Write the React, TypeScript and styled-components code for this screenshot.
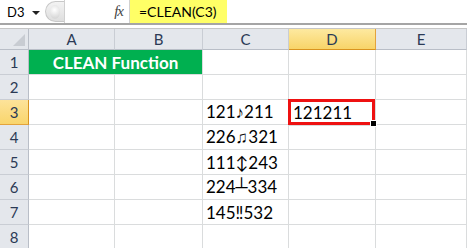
import React from 'react';
import styled, { createGlobalStyle } from 'styled-components';

const GlobalStyle = createGlobalStyle`
  body {
    margin: 0;
    background: #ffffff;
    font-family: Lato, "Open Sans", sans-serif;
  }
`;

const Page = styled.div`
  width: 467px;
  height: 248px;
  overflow: hidden;
  background: #ffffff;
`;

const FormulaBar = styled.div`
  display: flex;
  align-items: stretch;
  height: 23px;
  border-bottom: 2px solid #a5a5a5;
  font-size: 14px;
  color: #000;
`;

const NameBox = styled.div`
  width: 45px;
  flex-shrink: 0;
  display: flex;
  align-items: center;
  justify-content: space-between;
  padding: 0 5px 0 7px;
  box-sizing: border-box;
  font-size: 13px;
`;

const Caret = styled.span`
  width: 0;
  height: 0;
  border-left: 4px solid transparent;
  border-right: 4px solid transparent;
  border-top: 4px solid #222;
  margin-top: 2px;
`;

const Knob = styled.div`
  width: 18px;
  flex-shrink: 0;
  display: flex;
  align-items: center;
  justify-content: center;
  margin: 1px 0;
  border: 1px solid #c8c8c8;
  border-right: none;
  border-radius: 11px 0 0 11px;
  background: linear-gradient(#f3f3f3, #dedede);
`;

const KnobDot = styled.span`
  width: 10px;
  height: 14px;
  border-radius: 50%;
  background: radial-gradient(circle at 45% 35%, #ffffff, #d8d8d8 75%);
`;

const FxArea = styled.div`
  width: 66px;
  flex-shrink: 0;
  display: flex;
  align-items: center;
  justify-content: flex-end;
  padding-right: 6px;
  box-sizing: border-box;
  border-left: 1px solid #d0d0d0;
  border-right: 1px solid #d0d0d0;
`;

const Fx = styled.span`
  font-family: "Liberation Serif", serif;
  font-style: italic;
  font-size: 15px;
  color: #444;
  letter-spacing: -1px;
`;

const FormulaInput = styled.div`
  flex: 1;
  display: flex;
  align-items: stretch;
`;

const Highlight = styled.span`
  background: #ffff66;
  padding: 0 10px 0 9px;
  display: flex;
  align-items: center;
`;

const Sheet = styled.div`
  margin-top: 3px;
  display: grid;
  grid-template-columns: 29px 86px 88px 86px 87px 91px;
  grid-template-rows: 21px repeat(8, 25px);
  border-top: 1px solid #c6c6c6;
`;

const Corner = styled.div`
  position: relative;
  background: #e4e7ec;
  border-right: 1px solid #b9bec7;
  border-bottom: 1px solid #b9bec7;
`;

const CornerTriangle = styled.span`
  position: absolute;
  right: 3px;
  bottom: 3px;
  width: 0;
  height: 0;
  border-left: 12px solid transparent;
  border-bottom: 12px solid #c8ccd2;
`;

const ColHeader = styled.div<{ $active?: boolean }>`
  display: flex;
  align-items: center;
  justify-content: center;
  font-size: 15px;
  color: #2b3a55;
  background: ${(p) => (p.$active ? 'linear-gradient(#fde9a0, #f8d468)' : '#e4e7ec')};
  border-right: 1px solid ${(p) => (p.$active ? '#e3a33c' : '#c9cdd4')};
  border-bottom: 1px solid ${(p) => (p.$active ? '#d9941f' : '#b9bec7')};
`;

const RowHeader = styled.div<{ $active?: boolean }>`
  display: flex;
  align-items: center;
  justify-content: center;
  font-size: 15px;
  color: #2b3a55;
  background: ${(p) => (p.$active ? 'linear-gradient(#fde39a, #f9d56c)' : '#e4e7ec')};
  border-right: 1px solid ${(p) => (p.$active ? '#d9941f' : '#b9bec7')};
  border-bottom: 1px solid ${(p) => (p.$active ? '#e3a33c' : '#c9cdd4')};
`;

const Cell = styled.div<{ $selected?: boolean }>`
  position: relative;
  display: flex;
  align-items: center;
  font-size: 17px;
  color: #000;
  white-space: nowrap;
  border-right: 1px solid #dadcdd;
  border-bottom: 1px solid #dadcdd;
  box-shadow: ${(p) => (p.$selected ? 'inset 0 0 0 3px #ee1111' : 'none')};
  margin: ${(p) => (p.$selected ? '-1px 0 -1px -1px' : '0')};
  padding-left: ${(p) => (p.$selected ? '5px' : '3px')};
  z-index: ${(p) => (p.$selected ? 1 : 0)};
`;

const FillHandle = styled.span`
  position: absolute;
  right: -2px;
  bottom: -2px;
  width: 5px;
  height: 5px;
  background: #000;
  border: 1px solid #fff;
`;

const TitleCell = styled.div`
  grid-column: span 2;
  display: flex;
  align-items: center;
  justify-content: center;
  background: #00b050;
  color: #ffffff;
  font-weight: 700;
  font-size: 17px;
  border-bottom: 1px solid #dadcdd;
  border-right: 1px solid #dadcdd;
`;

const columns = ['A', 'B', 'C', 'D', 'E'];

const dataC: Record<number, string> = {
  3: '121\u266A211',
  4: '226\u266B321',
  5: '111\u2195243',
  6: '224\u2534334',
  7: '145\u203C532',
};

const App: React.FC = () => (
  <Page>
    <GlobalStyle />
    <FormulaBar>
      <NameBox>
        D3
        <Caret />
      </NameBox>
      <Knob>
        <KnobDot />
      </Knob>
      <FxArea>
        <Fx>fx</Fx>
      </FxArea>
      <FormulaInput>
        <Highlight>=CLEAN(C3)</Highlight>
      </FormulaInput>
    </FormulaBar>
    <Sheet>
      <Corner>
        <CornerTriangle />
      </Corner>
      {columns.map((c) => (
        <ColHeader key={c} $active={c === 'D'}>{c}</ColHeader>
      ))}
      {[1, 2, 3, 4, 5, 6, 7, 8].map((r) => (
        <React.Fragment key={r}>
          <RowHeader $active={r === 3}>{r}</RowHeader>
          {r === 1 ? (
            <>
              <TitleCell>CLEAN Function</TitleCell>
              <Cell />
              <Cell />
              <Cell />
            </>
          ) : (
            <>
              <Cell />
              <Cell />
              <Cell>{dataC[r] ?? ''}</Cell>
              {r === 3 ? (
                <Cell $selected>
                  121211
                  <FillHandle />
                </Cell>
              ) : (
                <Cell />
              )}
              <Cell />
            </>
          )}
        </React.Fragment>
      ))}
    </Sheet>
  </Page>
);

export default App;
